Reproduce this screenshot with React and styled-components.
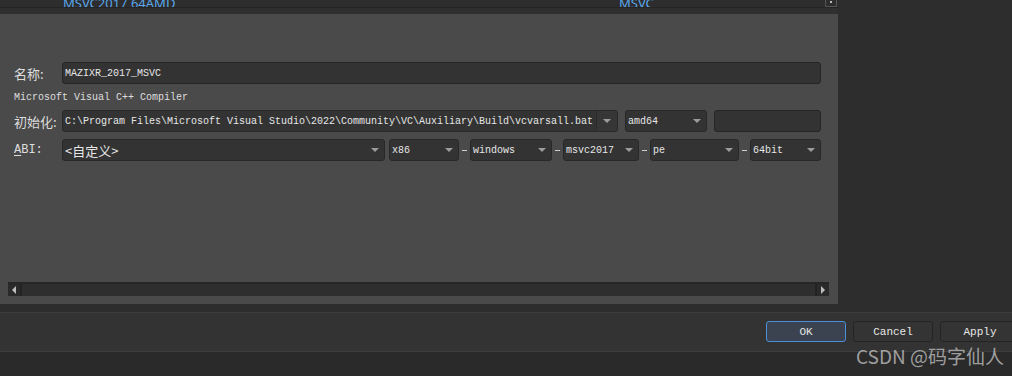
import React from 'react';
import styled, { createGlobalStyle } from 'styled-components';

const GlobalStyle = createGlobalStyle`
  html, body {
    margin: 0;
    padding: 0;
    background: #2b2b2b;
  }
`;

const mono = `"Liberation Mono", "Noto Sans CJK SC", monospace`;
const cjk = `"Noto Sans CJK SC", "Noto Sans", sans-serif`;

const Window = styled.div`
  position: relative;
  width: 1012px;
  height: 376px;
  background: #2d2d2d;
  overflow: hidden;
  display: flex;
  flex-direction: column;
  font-family: ${mono};
  color: #dcdcdc;
`;

const ListRow = styled.div`
  height: 7px;
  width: 838px;
  display: flex;
  align-items: flex-end;
  overflow: hidden;
  background: #2d2d2d;
  border-bottom: 1px solid #242424;
`;

const ListCell = styled.span`
  width: ${p => p.$w}px;
  padding-left: ${p => p.$pad}px;
  box-sizing: border-box;
  font-family: "Noto Sans", sans-serif;
  font-size: 13px;
  line-height: 13px;
  margin-bottom: -3px;
  color: #5aa8ec;
  white-space: nowrap;
`;

const MiniButton = styled.span`
  width: 12px;
  height: 7px;
  margin-left: auto;
  margin-right: 1px;
  border: 1px solid #555;
  border-top: none;
  box-sizing: border-box;
  display: flex;
  justify-content: center;
  &::after {
    content: '';
    width: 2px;
    height: 2px;
    margin-top: 1px;
    background: #bbb;
  }
`;

const Strip = styled.div`
  height: 6px;
  width: 838px;
  background: #2f2f2f;
`;

const Middle = styled.div`
  display: flex;
  height: 290px;
`;

const Panel = styled.div`
  width: 838px;
  background: #4a4a4a;
  display: flex;
  flex-direction: column;
`;

const Form = styled.div`
  padding: 48px 17px 0 14px;
  display: flex;
  flex-direction: column;
`;

const Row = styled.div`
  display: flex;
  align-items: center;
  height: 22px;
  margin-top: ${p => p.$mt || 0}px;
`;

const Label = styled.span`
  width: 48px;
  flex-shrink: 0;
  font-family: ${p => (p.$cjk ? cjk : mono)};
  font-size: ${p => (p.$cjk ? 13 : 12)}px;
  color: #dedede;
  white-space: nowrap;
  u { text-decoration: underline; text-underline-offset: 2px; }
`;

const Description = styled.div`
  height: 26px;
  display: flex;
  align-items: center;
  font-size: 10px;
  color: #dedede;
`;

const TextBox = styled.div`
  width: ${p => p.$w ? `${p.$w}px` : 'auto'};
  flex: ${p => (p.$w ? 'none' : 1)};
  height: 22px;
  box-sizing: border-box;
  background: #333333;
  border: 1px solid #262626;
  border-radius: 3px;
  display: flex;
  align-items: center;
  padding-left: 2px;
  font-size: 10px;
  color: #e6e6e6;
  white-space: nowrap;
  overflow: hidden;
`;

const Combo = styled.div`
  width: ${p => p.$w}px;
  flex: none;
  height: 22px;
  box-sizing: border-box;
  background: #333333;
  border: 1px solid #282828;
  border-radius: 3px;
  display: flex;
  align-items: center;
  font-family: ${p => (p.$cjk ? cjk : mono)};
  font-size: ${p => (p.$cjk ? 13 : 10)}px;
  color: #e6e6e6;
  white-space: nowrap;
  overflow: hidden;
`;

const ComboText = styled.span`
  flex: 1;
  padding-left: 2px;
  overflow: hidden;
`;

const ArrowBox = styled.span`
  width: ${p => (p.$split ? 20 : 18)}px;
  height: 100%;
  flex: none;
  display: flex;
  align-items: center;
  justify-content: center;
  border-left: ${p => (p.$split ? '1px solid #2a2a2a' : 'none')};
  background: ${p => (p.$split ? '#363636' : 'transparent')};
  &::after {
    content: '';
    border-left: 4px solid transparent;
    border-right: 4px solid transparent;
    border-top: 4px solid #9c9c9c;
  }
`;

const Dash = styled.span`
  width: 11px;
  flex: none;
  display: flex;
  justify-content: center;
  &::after {
    content: '';
    width: 5px;
    height: 1px;
    background: #d0d0d0;
  }
`;

const Gap = styled.span`
  width: ${p => p.$w}px;
  flex: none;
`;

const ScrollBar = styled.div`
  margin: auto 9px 8px 8px;
  height: 14px;
  box-sizing: border-box;
  border-top: 2px solid #262626;
  background: #2e2e2e;
  display: flex;
`;

const ScrollButton = styled.span`
  width: 12px;
  flex: none;
  background: #2a2a2a;
  border-right: ${p => (p.$left ? '2px solid #232323' : 'none')};
  border-left: ${p => (p.$left ? 'none' : '2px solid #232323')};
  display: flex;
  align-items: center;
  justify-content: center;
  &::after {
    content: '';
    border-top: 4px solid transparent;
    border-bottom: 4px solid transparent;
    ${p => (p.$left ? 'border-right: 4px solid #bdbdbd;' : 'border-left: 4px solid #bdbdbd;')}
  }
`;

const Track = styled.span`
  flex: 1;
`;

const Side = styled.div`
  flex: 1;
  background: #2d2d2d;
`;

const Spacer = styled.div`
  height: 8px;
  background: #2d2d2d;
  border-bottom: 1px solid #3c3c3c;
`;

const Footer = styled.div`
  height: 39px;
  background: #333333;
  border-bottom: 1px solid #3e3e3e;
  display: flex;
  justify-content: flex-end;
  align-items: flex-start;
  padding-top: 8px;
  box-sizing: border-box;
  gap: 7px;
  margin-right: -8px;
`;

const Button = styled.button`
  width: 80px;
  height: 21px;
  box-sizing: border-box;
  border-radius: 3px;
  border: 1px solid ${p => (p.$primary ? '#4a8fd8' : '#242424')};
  background: ${p => (p.$primary ? '#3c4350' : '#343434')};
  color: #e8e8e8;
  font-family: ${mono};
  font-size: 11px;
  padding: 0;
`;

const Bottom = styled.div`
  flex: 1;
  background: #2a2a2a;
`;

const Watermark = styled.span`
  position: absolute;
  left: 856px;
  top: 342px;
  font-family: ${cjk};
  font-size: 19px;
  color: rgba(210, 210, 210, 0.7);
  white-space: nowrap;
`;

const abiParts = [
  { text: 'x86', w: 70 },
  { text: 'windows', w: 82 },
  { text: 'msvc2017', w: 76 },
  { text: 'pe', w: 89 },
  { text: '64bit', w: 71 },
];

export default function App() {
  return (
    <Window>
      <GlobalStyle />
      <ListRow>
        <ListCell $w={556} $pad={63}>MSVC2017 64AMD</ListCell>
        <ListCell $w={200} $pad={63}>MSVC</ListCell>
        <MiniButton />
      </ListRow>
      <Strip />
      <Middle>
        <Panel>
          <Form>
            <Row>
              <Label $cjk>名称:</Label>
              <TextBox>MAZIXR_2017_MSVC</TextBox>
            </Row>
            <Description>Microsoft Visual C++ Compiler</Description>
            <Row>
              <Label $cjk>初始化:</Label>
              <Combo $w={556}>
                <ComboText>C:\Program Files\Microsoft Visual Studio\2022\Community\VC\Auxiliary\Build\vcvarsall.bat</ComboText>
                <ArrowBox $split />
              </Combo>
              <Gap $w={7} />
              <Combo $w={82}>
                <ComboText>amd64</ComboText>
                <ArrowBox />
              </Combo>
              <Gap $w={7} />
              <TextBox $w={107} />
            </Row>
            <Row $mt={7}>
              <Label><u>A</u>BI:</Label>
              <Combo $w={323} $cjk>
                <ComboText>&lt;自定义&gt;</ComboText>
                <ArrowBox />
              </Combo>
              <Gap $w={4} />
              {abiParts.map((p, i) => (
                <React.Fragment key={p.text}>
                  {i > 0 && <Dash />}
                  <Combo $w={p.w}>
                    <ComboText>{p.text}</ComboText>
                    <ArrowBox />
                  </Combo>
                </React.Fragment>
              ))}
            </Row>
          </Form>
          <ScrollBar>
            <ScrollButton $left />
            <Track />
            <ScrollButton />
          </ScrollBar>
        </Panel>
        <Side />
      </Middle>
      <Spacer />
      <Footer>
        <Button $primary>OK</Button>
        <Button>Cancel</Button>
        <Button>Apply</Button>
      </Footer>
      <Bottom />
      <Watermark>CSDN @码字仙人</Watermark>
    </Window>
  );
}
